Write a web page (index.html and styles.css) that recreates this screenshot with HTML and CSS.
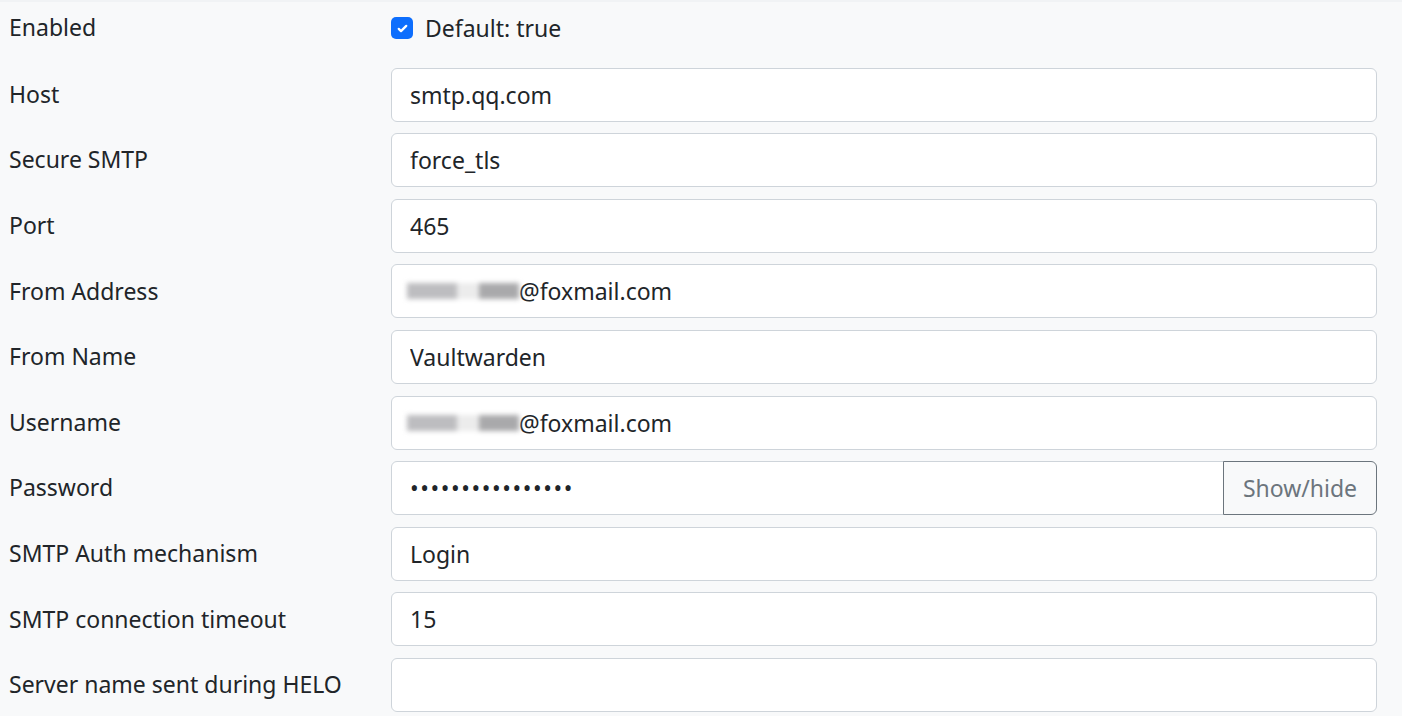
FILE: index.html
```html
<!DOCTYPE html>
<html lang="en">
<head>
<meta charset="utf-8">
<title>SMTP settings</title>
<link rel="stylesheet" href="styles.css">
</head>
<body>
<form class="settings">
  <div class="row row-check">
    <label class="label">Enabled</label>
    <div class="field check">
      <span class="checkbox"><svg viewBox="0 0 20 20" width="15" height="15"><path d="M5 10.5l3 3 7-7" fill="none" stroke="#fff" stroke-width="3" stroke-linecap="round" stroke-linejoin="round"/></svg></span>
      <span class="check-label">Default: true</span>
    </div>
  </div>
  <div class="row">
    <label class="label">Host</label>
    <div class="field"><input class="control" type="text" value="smtp.qq.com"></div>
  </div>
  <div class="row">
    <label class="label">Secure SMTP</label>
    <div class="field"><input class="control" type="text" value="force_tls"></div>
  </div>
  <div class="row">
    <label class="label">Port</label>
    <div class="field"><input class="control" type="text" value="465"></div>
  </div>
  <div class="row">
    <label class="label">From Address</label>
    <div class="field"><div class="control"><span class="blur"><i class="b1"></i><i class="b2"></i><i class="b3"></i></span>@foxmail.com</div></div>
  </div>
  <div class="row">
    <label class="label">From Name</label>
    <div class="field"><input class="control" type="text" value="Vaultwarden"></div>
  </div>
  <div class="row">
    <label class="label">Username</label>
    <div class="field"><div class="control"><span class="blur"><i class="b1"></i><i class="b2"></i><i class="b3"></i></span>@foxmail.com</div></div>
  </div>
  <div class="row">
    <label class="label">Password</label>
    <div class="field group">
      <div class="control control-left">&#8226;&#8226;&#8226;&#8226;&#8226;&#8226;&#8226;&#8226;&#8226;&#8226;&#8226;&#8226;&#8226;&#8226;&#8226;&#8226;</div>
      <button type="button" class="btn">Show/hide</button>
    </div>
  </div>
  <div class="row">
    <label class="label">SMTP Auth mechanism</label>
    <div class="field"><input class="control" type="text" value="Login"></div>
  </div>
  <div class="row">
    <label class="label">SMTP connection timeout</label>
    <div class="field"><input class="control" type="text" value="15"></div>
  </div>
  <div class="row">
    <label class="label">Server name sent during HELO</label>
    <div class="field"><input class="control" type="text" value=""></div>
  </div>
</form>
</body>
</html>
```

FILE: styles.css
```css
html, body {
  margin: 0;
  padding: 0;
  background: #f8f9fa;
}
body {
  font-family: "Noto Sans", "Open Sans", sans-serif;
  font-size: 23px;
  color: #212529;
  border-top: 2px solid #f1f3f5;
}
.settings {
  display: flex;
  flex-direction: column;
  gap: 11.6px;
  padding: 0 25px 0 9px;
}
.row {
  display: grid;
  grid-template-columns: 382px 1fr;
  align-items: center;
  height: 54px;
}
.row-check {
  height: 52px;
  margin-bottom: 2px;
}
.label {
  line-height: 1.2;
  white-space: nowrap;
}
.field {
  display: flex;
  align-items: center;
  height: 100%;
}
.check {
  gap: 12px;
}
.checkbox {
  width: 22px;
  height: 22px;
  border-radius: 5px;
  background: #0d6efd;
  display: flex;
  align-items: center;
  justify-content: center;
}
.check-label {
  margin-top: -1px;
}
.control {
  box-sizing: border-box;
  width: 100%;
  height: 54px;
  border: 1px solid #ced4da;
  border-radius: 6px;
  background: #fff;
  font: inherit;
  color: #212529;
  padding: 0 18px;
  display: flex;
  align-items: center;
  outline: none;
}
.control-left {
  border-radius: 6px 0 0 6px;
  flex: 1;
  letter-spacing: 1.6px;
}
.btn {
  box-sizing: border-box;
  height: 54px;
  width: 154px;
  border: 1px solid #6c757d;
  border-radius: 0 6px 6px 0;
  margin-left: -1px;
  background: #f8f9fa;
  color: #6c757d;
  font: inherit;
  padding: 0 10px;
}
.blur {
  display: inline-flex;
  align-items: center;
  height: 24px;
  margin-left: -3px;
  filter: blur(2.5px);
}
.blur i {
  display: block;
  height: 16px;
}
.b1 { width: 50px; background: #bdbdc0; }
.b2 { width: 22px; background: #ececec; }
.b3 { width: 40px; background: #a9a9ab; }
```
